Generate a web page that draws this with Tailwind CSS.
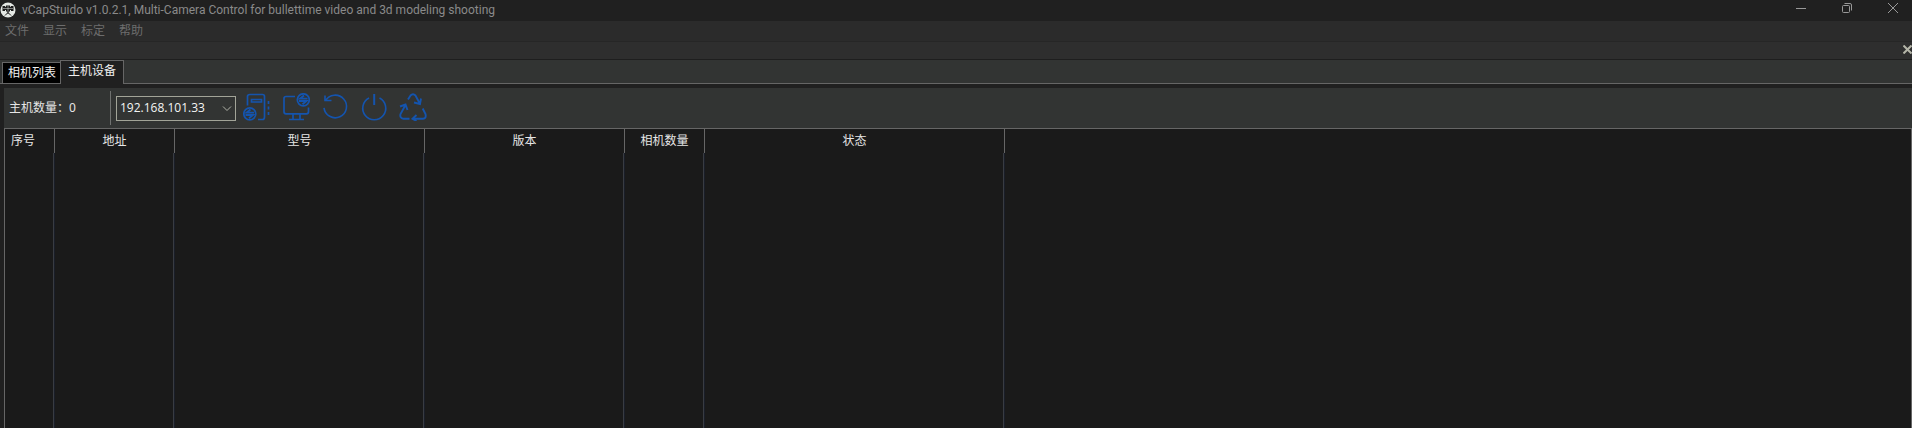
<!DOCTYPE html>
<html lang="zh-CN">
<head>
    <meta charset="UTF-8">
    <meta name="viewport" content="width=device-width, initial-scale=1.0">
    <title>vCapStuido</title>
    <script src="https://cdn.jsdelivr.net/npm/@tailwindcss/browser@4"></script>
</head>
<body class="flex h-screen flex-col overflow-hidden bg-[#202020] font-['Noto_Sans','Noto_Sans_CJK_SC',sans-serif] text-xs leading-4 text-[#e6e6e6]">
    <!-- Title bar -->
    <header class="flex h-[21px] shrink-0 items-start justify-between pr-[14px] text-[#8a8a8a]">
        <div class="flex items-center gap-[6px] pt-px">
            <svg class="size-4" viewBox="0 0 16 16" aria-hidden="true">
                <circle cx="8" cy="8" r="7.5" fill="#e4e8e4"/>
                <path fill="#1c1c1c" d="M2.500 4H5v.8h1V3.500h4v1.300h1V4h2.500v5H11V8h-1v1.500H6V8H5v1H2.500z"/>
                <path stroke="#1c1c1c" d="M8 9v3M8 10.500L5 13.500M8 10.500l3 3"/>
                <path stroke="#e4e8e4" stroke-width=".5" d="M3 6.500h10M8 4v5"/>
            </svg>
            <h1 class="pt-px font-['Roboto',sans-serif]">vCapStuido v1.0.2.1, Multi-Camera Control for bullettime video and 3d modeling shooting</h1>
        </div>
        <div class="flex gap-9 pt-[3px]">
            <button aria-label="最小化"><svg class="block size-[10px]" viewBox="0 0 10 10" stroke="#999"><path d="M0 5.500h10"/></svg></button>
            <button aria-label="还原"><svg class="block size-[10px]" viewBox="0 0 10 10" fill="none" stroke="#999"><rect x=".5" y="2.500" width="7" height="7" rx="1"/><path d="M2.500.500H8Q9.500.500 9.500 2v5.500"/></svg></button>
            <button aria-label="关闭"><svg class="block size-[10px]" viewBox="0 0 10 10" stroke="#999"><path d="M0 0l10 10M10 0L0 10"/></svg></button>
        </div>
    </header>

    <!-- Menu -->
    <nav class="flex h-[21px] shrink-0 items-center gap-[14px] border-b border-[#262626] bg-[#2b2b2b] px-[5px] text-[#6d6d6d]">
        <button>文件</button>
        <button>显示</button>
        <button>标定</button>
        <button>帮助</button>
    </nav>

    <!-- Panel caption -->
    <div class="flex h-[18px] shrink-0 items-start justify-end border-b border-[#1e1e1e] bg-[#2e2e2e] pt-[3px]">
        <button aria-label="关闭面板"><svg class="block size-[9px]" viewBox="0 0 9 9" stroke="#b4b5a8" stroke-width="2"><path d="M.500.500l8 8M8.500.500l-8 8"/></svg></button>
    </div>

    <!-- Tabs -->
    <div class="flex h-6 shrink-0 items-end bg-[#323433] text-[#f0f0f0]" role="tablist">
        <div class="w-[2px] self-stretch border-b border-[#666]"></div>
        <button class="h-[22px] border border-r-0 border-[#666] bg-black pr-1 pl-[5px]" role="tab" aria-selected="false">相机列表</button>
        <button class="h-6 border border-b-0 border-[#666] bg-[#202020] px-[7px] pb-[3px]" role="tab" aria-selected="true">主机设备</button>
        <div class="flex-1 self-stretch border-b border-[#666]"></div>
    </div>

    <main class="flex flex-1 flex-col pt-1 pl-1">
        <!-- Toolbar -->
        <div class="flex h-10 shrink-0 items-center bg-[#323433] pl-[5px]">
            <span class="w-[101px]">主机数量：0</span>
            <div class="mr-[5px] h-[34px] w-px bg-[#707270]"></div>
            <div class="relative mr-[7px]">
                <select aria-label="主机地址" class="block h-[25px] w-[120px] appearance-none border border-[#a2a498] bg-[#323433] px-[3px] font-['Open_Sans',sans-serif] text-xs text-[#f4f4f4]">
                    <option>192.168.101.33</option>
                </select>
                <svg class="pointer-events-none absolute top-[10px] right-1 h-[6px] w-[10px]" viewBox="0 0 10 6" fill="none" stroke="#b0b2a8"><path d="M1 .500l4 4 4-4"/></svg>
            </div>
            <div class="flex gap-[11px] pb-[2px]">
                <button aria-label="更新主机">
                    <svg class="block size-7" viewBox="0 0 28 28" fill="none" stroke="#1454ae" stroke-width="1.700">
                        <path d="M4.500 12.500V3.500Q4.500 1.500 7 1.500h12.500Q21.500 1.500 21.500 3.500V24q0 2.500-2 2.500H15M8.500 6.500h10v2.500h-10z"/>
                        <path stroke-dasharray="3 2.500" d="M25.500 8v14"/>
                        <circle cx="6.800" cy="20.800" r="6"/>
                        <path stroke-width="1.800" d="M11 19.700H3.500L7.500 16.500M2.500 22H10L6 25.200"/>
                    </svg>
                </button>
                <button aria-label="更新显示">
                    <svg class="block size-7" viewBox="0 0 28 28" fill="none" stroke="#1454ae" stroke-width="1.700">
                        <path d="M13 3.500H4Q2 3.500 2 5.500v13.300q0 2 2 2h20.500q2 0 2-2V14.500M11 21v5.500M18 21v5.500M7 26.500h15"/>
                        <circle cx="21.300" cy="6.800" r="6"/>
                        <path stroke-width="1.800" d="M25.500 5.700H18L22 2.500M17 8h7.500L20.500 11.200"/>
                    </svg>
                </button>
                <button aria-label="刷新">
                    <svg class="block size-7" viewBox="0 0 28 28" fill="none" stroke="#1454ae" stroke-width="1.600">
                        <path d="M4.500 7.700A11.300 11.300 0 1 1 3 14.800M4 2.500v5h6.500"/>
                    </svg>
                </button>
                <button aria-label="电源">
                    <svg class="block size-7" viewBox="0 0 28 28" fill="none" stroke="#1454ae" stroke-width="1.600">
                        <path d="M9 5a11.500 11.500 0 1 0 10.500 0"/>
                        <path stroke-width="2" d="M14.200 1v11"/>
                    </svg>
                </button>
                <button aria-label="回收">
                    <svg class="block size-7" viewBox="0 0 28 28" fill="none" stroke="#1454ae" stroke-width="1.900">
                        <path d="M9 6.500L11.500 2.500Q14 0 16.500 2.500l4 7.500M22 5.500l-1 5.500-6-1.500"/>
                        <path d="M23.700 15.500L26.500 21q1 4.500-2.500 4.800H14M17.500 22l-4 3.800 4 2.200"/>
                        <path d="M10.500 25.800H4.500Q.500 25 1.500 21L6.500 12M1 13.500l5.500-2L8.500 17"/>
                    </svg>
                </button>
            </div>
        </div>

        <!-- Host list -->
        <div class="flex flex-1 border border-b-0 border-[#666] bg-[#1a1a1a]">
            <table class="h-full w-full table-fixed border-separate border-spacing-0">
                <colgroup>
                    <col class="w-[50px]"><col class="w-[120px]"><col class="w-[250px]"><col class="w-[200px]"><col class="w-[80px]"><col class="w-[300px]"><col>
                </colgroup>
                <thead class="h-6">
                    <tr class="[&>th]:border-r [&>th]:border-[#666] [&>th]:p-0 [&>th]:font-normal [&>th:last-child]:border-r-0">
                        <th class="h-6"><div class="pl-[6px] text-left">序号</div></th>
                        <th>地址</th>
                        <th>型号</th>
                        <th>版本</th>
                        <th>相机数量</th>
                        <th>状态</th>
                        <th></th>
                    </tr>
                </thead>
                <tbody>
                    <tr class="[&>td]:border-r [&>td]:border-[#1a1e28] [&>td]:shadow-[inset_-1px_0_0_#393c42] [&>td:last-child]:border-r-0 [&>td:last-child]:shadow-none">
                        <td></td><td></td><td></td><td></td><td></td><td></td><td></td>
                    </tr>
                </tbody>
            </table>
        </div>
    </main>
</body>
</html>
